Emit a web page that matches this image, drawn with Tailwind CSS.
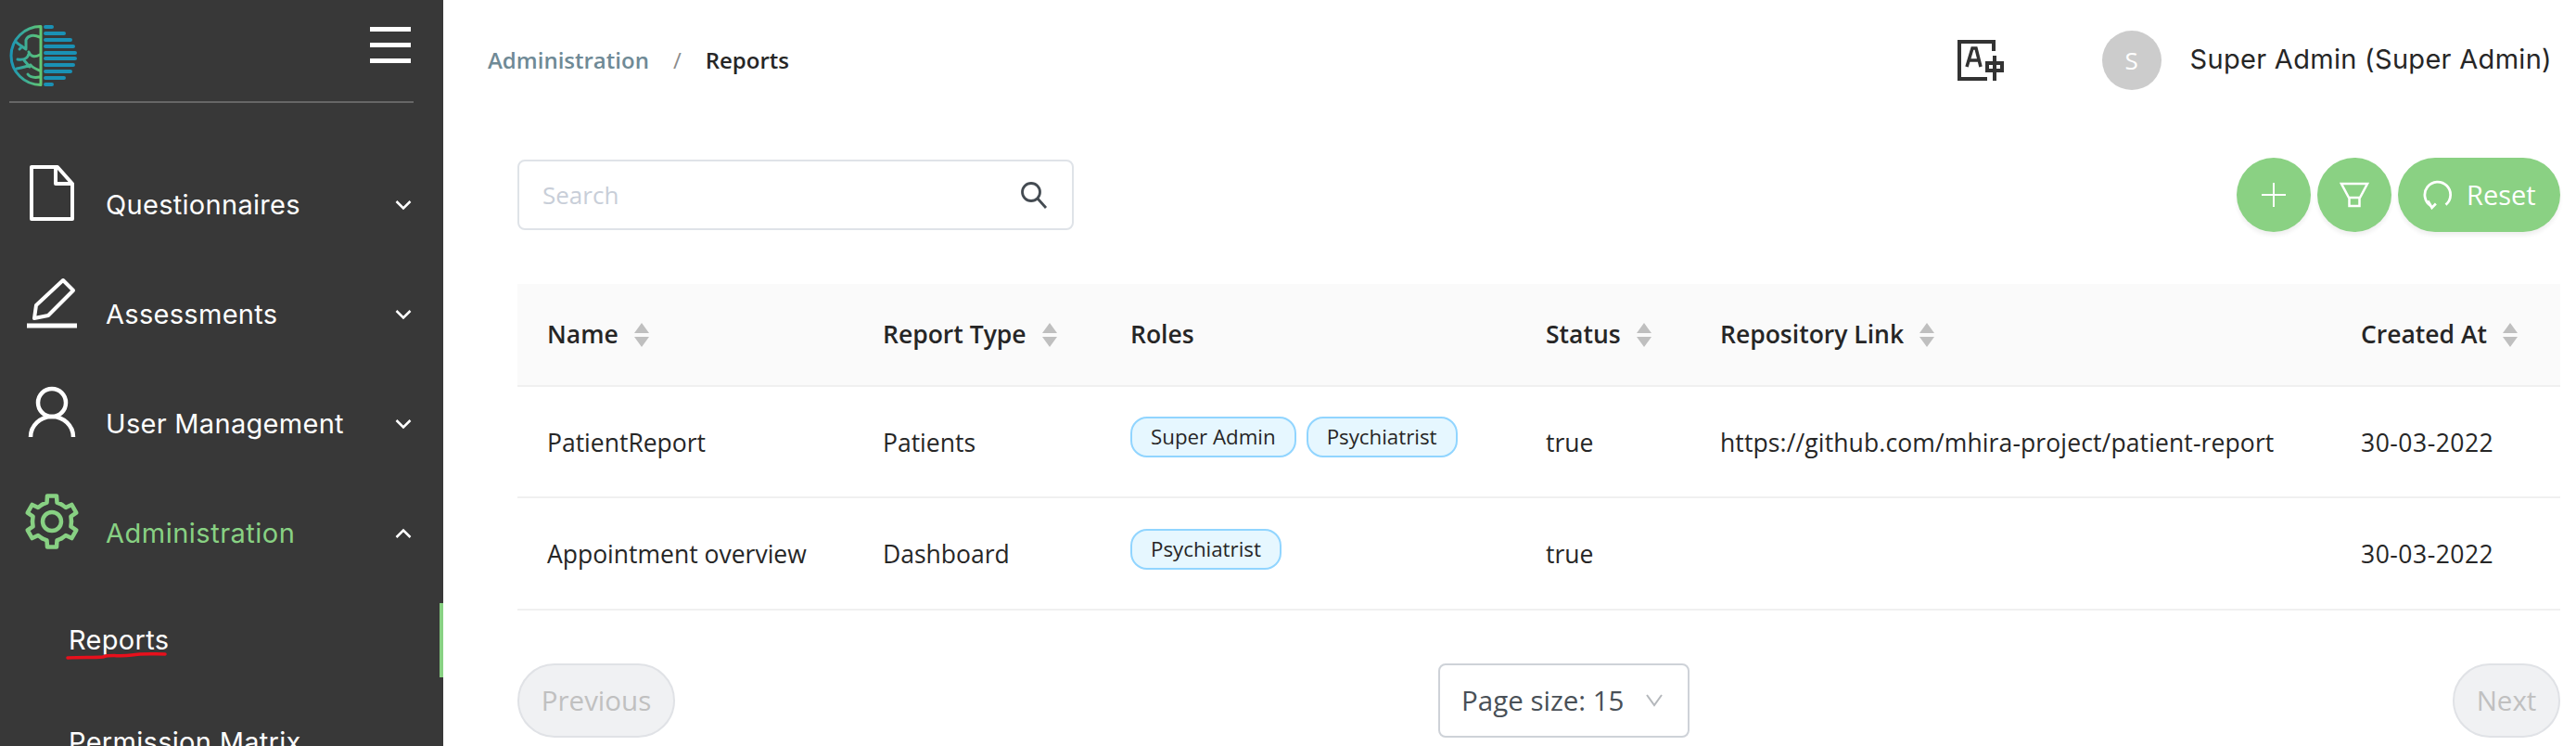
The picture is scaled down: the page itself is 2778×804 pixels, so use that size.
<!DOCTYPE html>
<html lang="en">
<head>
<meta charset="UTF-8">
<script src="https://cdn.jsdelivr.net/npm/@tailwindcss/browser@4"></script>
<title>Reports</title>
</head>
<body class="h-[804px] overflow-hidden bg-white font-['Open_Sans',sans-serif] text-[#262626]">
<div class="flex h-[804px] overflow-hidden">

  <!-- sidebar -->
  <aside class="w-[478px] shrink-0 h-full bg-[#383838] overflow-hidden font-['Inter',sans-serif] text-white text-[29px] tracking-[0.3px]">
    <div class="relative mx-[10px] w-[436px] h-[111px] border-b-2 border-[#666666]">
      <svg class="absolute left-[-10px] top-0" width="90" height="100" viewBox="0 0 90 100" fill="none">
        <defs>
          <linearGradient id="lg" x1="11" y1="0" x2="44" y2="0" gradientUnits="userSpaceOnUse">
            <stop offset="0" stop-color="#1a94b8"/>
            <stop offset="1" stop-color="#62c772"/>
          </linearGradient>
        </defs>
        <g stroke="url(#lg)" stroke-width="3" stroke-linecap="round">
          <path d="M44 28.500V91.500M44 28.500A32 31.500 0 0 0 44 91.500"/>
          <path d="M43 40C36 37 30 38 28 43M17 45C20 48 24 50 28 53M24 50L21 53M28 43L28 52"/>
          <path d="M43 59C37 62 33 61 31 56M31 58C30 63 25 65 19 64"/>
          <path d="M18 74C23 73 28 72 33 70M26 65L32 72M43 76C38 74 35 73 33 70"/>
          <path d="M43 83C37 84 32 83 30 80"/>
        </g>
        <g stroke="#1a91b5" stroke-width="4" stroke-linecap="round">
          <path d="M49 29H56M49 36H69M49 43H76M49 50H79M49 57H81M49 63H81M49 70H79M49 77H76M49 84H69M49 91H56"/>
        </g>
      </svg>
      <div class="absolute left-[389px] top-[29px] w-[44px] flex flex-col gap-[12px]">
        <span class="block h-[5px] bg-white"></span>
        <span class="block h-[5px] bg-white"></span>
        <span class="block h-[5px] bg-white"></span>
      </div>
    </div>

    <nav class="pt-[51px]">
      <div class="flex items-center h-[118px] pl-[26px] pr-[34px]">
        <svg class="mb-[26px]" width="60" height="64" viewBox="0 0 60 64" fill="none" stroke="#fff" stroke-width="4" stroke-linejoin="round">
          <path d="M8 4H36L52 22V60H8Z"/><path d="M34 4V22H52"/>
        </svg>
        <span class="ml-[28px] flex-1">Questionnaires</span>
        <svg width="18" height="12" viewBox="0 0 18 12" fill="none" stroke="#fff" stroke-width="2.500"><path d="M1.500 2L9 9.500L16.500 2"/></svg>
      </div>
      <div class="flex items-center h-[118px] pl-[26px] pr-[34px]">
        <svg class="mb-[26px]" width="60" height="60" viewBox="0 0 60 60" fill="none" stroke="#fff" stroke-width="4" stroke-linejoin="round">
          <path d="M11 47L13 33L42 6L53 17L26 44Z"/><path d="M3 55H57" stroke-width="5"/>
        </svg>
        <span class="ml-[28px] flex-1">Assessments</span>
        <svg width="18" height="12" viewBox="0 0 18 12" fill="none" stroke="#fff" stroke-width="2.500"><path d="M1.500 2L9 9.500L16.500 2"/></svg>
      </div>
      <div class="flex items-center h-[118px] pl-[26px] pr-[34px]">
        <svg class="mb-[26px]" width="60" height="60" viewBox="0 0 60 60" fill="none" stroke="#fff" stroke-width="4.500">
          <circle cx="30" cy="20" r="15"/><path d="M7 57A23 22 0 0 1 53 57"/>
        </svg>
        <span class="ml-[28px] flex-1">User Management</span>
        <svg width="18" height="12" viewBox="0 0 18 12" fill="none" stroke="#fff" stroke-width="2.500"><path d="M1.500 2L9 9.500L16.500 2"/></svg>
      </div>
      <div class="flex items-center h-[118px] pl-[26px] pr-[34px]">
        <svg class="mb-[26px]" width="60" height="64" viewBox="-30 -32 60 64" fill="none" stroke="#88d183" stroke-width="4.500" stroke-linejoin="round" stroke-linecap="round">
          <circle cx="0" cy="0" r="10"/>
          <path d="M-10.500 -18.200L-5.500 -20.400L-5 -27.500H5L5.500 -20.400L10.500 -18.200"/>
          <path transform="rotate(60)" d="M-10.500 -18.200L-5.500 -20.400L-5 -27.500H5L5.500 -20.400L10.500 -18.200"/>
          <path transform="rotate(120)" d="M-10.500 -18.200L-5.500 -20.400L-5 -27.500H5L5.500 -20.400L10.500 -18.200"/>
          <path transform="rotate(180)" d="M-10.500 -18.200L-5.500 -20.400L-5 -27.500H5L5.500 -20.400L10.500 -18.200"/>
          <path transform="rotate(240)" d="M-10.500 -18.200L-5.500 -20.400L-5 -27.500H5L5.500 -20.400L10.500 -18.200"/>
          <path transform="rotate(300)" d="M-10.500 -18.200L-5.500 -20.400L-5 -27.500H5L5.500 -20.400L10.500 -18.200"/>
        </svg>
        <span class="ml-[28px] flex-1 text-[#88d183] tracking-[0.5px]">Administration</span>
        <svg width="18" height="12" viewBox="0 0 18 12" fill="none" stroke="#fff" stroke-width="2.500"><path d="M1.500 10L9 2.500L16.500 10"/></svg>
      </div>
      <div class="relative flex items-center h-[80px] mt-[16px] pl-[74px] border-r-4 border-[#88d183]">
        <span>Reports</span>
        <svg class="absolute left-[70px] top-[50px]" width="112" height="12" viewBox="0 0 112 12" fill="none" stroke="#e8101c" stroke-width="3.500" stroke-linecap="round"><path d="M3 9C20 8 28 9 41 8C50 5 58 8 72 6C85 4 95 5 108 5"/></svg>
      </div>
      <div class="flex items-center h-[80px] mt-[30px] pl-[74px]">Permission Matrix</div>
    </nav>
  </aside>

  <!-- main -->
  <main class="flex-1 min-w-0">
    <header class="flex items-center h-[130px] pl-[48px] pr-[26px] text-[#262626]">
      <div class="flex items-center text-[24px] font-semibold">
        <span class="text-[#6f8a96]">Administration</span>
        <span class="mx-[26px] font-normal text-[#8c8c8c]">/</span>
        <span>Reports</span>
      </div>
      <svg class="ml-auto" width="56" height="52" viewBox="0 0 56 52" fill="none" stroke="#333" stroke-width="4">
        <path d="M43 16V6H6V46H36"/>
        <path d="M14 33L20 13H24L29 33M17 26H27" stroke-width="3.500"/>
        <rect x="36" y="29" width="16" height="8"/>
        <path d="M44 21V48"/>
      </svg>
      <div class="ml-[104px] flex items-center justify-center w-[64px] h-[64px] rounded-full bg-[#cccccc] text-white text-[26px]">S</div>
      <span class="ml-[31px] -mt-[3px] font-['Inter',sans-serif] text-[29px] tracking-[0.3px]">Super Admin (Super Admin)</span>
    </header>

    <div class="mt-[40px] ml-[80px] mr-[17px]">
      <div class="flex items-start h-[80px] pt-[2px]">
        <div class="flex items-center w-[600px] h-[76px] pl-[25px] pr-[26px] border-2 border-[#dfe3e8] rounded-[8px]">
          <span class="flex-1 text-[#c8ced8] text-[26px]">Search</span>
          <svg width="30" height="30" viewBox="0 0 30 30" fill="none" stroke="#444b52" stroke-width="2.800"><circle cx="12" cy="12" r="9.500"/><path d="M19 19L28 29"/></svg>
        </div>
        <div class="ml-auto -mt-[2px] flex gap-[7px] text-white">
          <button class="flex items-center justify-center w-[80px] h-[80px] rounded-full bg-[#8ad183] shadow-[0_4px_4px_rgba(0,0,0,0.06)]">
            <svg width="26" height="26" viewBox="0 0 26 26" fill="none" stroke="#fff" stroke-width="2"><path d="M13 0V26M0 13H26"/></svg>
          </button>
          <button class="flex items-center justify-center w-[80px] h-[80px] rounded-full bg-[#8ad183] shadow-[0_4px_4px_rgba(0,0,0,0.06)]">
            <svg width="32" height="28" viewBox="0 0 32 28" fill="none" stroke="#fff" stroke-width="2.500"><path d="M2 2H30L22 17H10ZM10.500 17H21.500V26H10.500Z"/></svg>
          </button>
          <button class="flex items-center w-[175px] h-[80px] pl-[27px] rounded-full bg-[#8ad183] shadow-[0_4px_4px_rgba(0,0,0,0.06)] text-[29px]">
            <svg width="32" height="32" viewBox="0 0 30 30" fill="none" stroke="#fff" stroke-width="2.600"><path d="M8 26A13 13 0 1 1 23 25"/><path d="M5 21L9 28L13 24"/></svg>
            <span class="ml-[15px]">Reset</span>
          </button>
        </div>
      </div>

      <table class="mt-[56px] w-full table-fixed text-[26.500px]">
        <colgroup>
          <col class="w-[362px]"><col class="w-[267px]"><col class="w-[448px]"><col class="w-[188px]"><col class="w-[691px]"><col class="w-[247px]">
        </colgroup>
        <thead class="bg-[#fafafa] text-left font-semibold">
          <tr class="h-[110px] border-b-2 border-[#f0f0f0]">
            <th class="pl-[32px] font-semibold"><span class="inline-flex items-center gap-[17px]">Name
              <svg width="16" height="26" viewBox="0 0 16 26" fill="#bfbfbf"><path d="M8 0L16 11H0ZM8 26L0 15H16Z"/></svg></span></th>
            <th class="pl-[32px] font-semibold"><span class="inline-flex items-center gap-[17px]">Report Type
              <svg width="16" height="26" viewBox="0 0 16 26" fill="#bfbfbf"><path d="M8 0L16 11H0ZM8 26L0 15H16Z"/></svg></span></th>
            <th class="pl-[32px] font-semibold">Roles</th>
            <th class="pl-[32px] font-semibold"><span class="inline-flex items-center gap-[17px]">Status
              <svg width="16" height="26" viewBox="0 0 16 26" fill="#bfbfbf"><path d="M8 0L16 11H0ZM8 26L0 15H16Z"/></svg></span></th>
            <th class="pl-[32px] font-semibold"><span class="inline-flex items-center gap-[17px]">Repository Link
              <svg width="16" height="26" viewBox="0 0 16 26" fill="#bfbfbf"><path d="M8 0L16 11H0ZM8 26L0 15H16Z"/></svg></span></th>
            <th class="pl-[32px] font-semibold"><span class="inline-flex items-center gap-[17px]">Created At
              <svg width="16" height="26" viewBox="0 0 16 26" fill="#bfbfbf"><path d="M8 0L16 11H0ZM8 26L0 15H16Z"/></svg></span></th>
          </tr>
        </thead>
        <tbody>
          <tr class="h-[120px] border-b-2 border-[#f0f0f0]">
            <td class="pl-[32px] pt-[3px]">PatientReport</td>
            <td class="pl-[32px] pt-[3px]">Patients</td>
            <td class="pl-[32px]">
              <div class="flex gap-[11px] -mt-[10px]">
                <span class="flex items-center h-[44px] px-[20px] rounded-[18px] bg-[#e6f7ff] border-2 border-[#91d5ff] text-[22.300px]">Super Admin</span>
                <span class="flex items-center h-[44px] px-[20px] rounded-[18px] bg-[#e6f7ff] border-2 border-[#91d5ff] text-[22.300px]">Psychiatrist</span>
              </div>
            </td>
            <td class="pl-[32px] pt-[3px]">true</td>
            <td class="pl-[32px] pt-[3px] tracking-[0.12px]">https://github.com/mhira-project/patient-report</td>
            <td class="pl-[32px] pt-[3px] tracking-[0.5px]">30-03-2022</td>
          </tr>
          <tr class="h-[121px] border-b-2 border-[#f0f0f0]">
            <td class="pl-[32px] pt-[3px]">Appointment overview</td>
            <td class="pl-[32px] pt-[3px]">Dashboard</td>
            <td class="pl-[32px]">
              <div class="flex gap-[11px] -mt-[10px]">
                <span class="flex items-center h-[44px] px-[20px] rounded-[18px] bg-[#e6f7ff] border-2 border-[#91d5ff] text-[22.300px]">Psychiatrist</span>
              </div>
            </td>
            <td class="pl-[32px] pt-[3px]">true</td>
            <td class="pl-[32px]"></td>
            <td class="pl-[32px] pt-[3px] tracking-[0.5px]">30-03-2022</td>
          </tr>
        </tbody>
      </table>

      <div class="mt-[57px] flex items-center justify-between text-[29.500px]">
        <button class="w-[170px] h-[80px] rounded-full bg-[#f0f1f3] border-2 border-[#e0e2e6] text-[#c0c0c0]">Previous</button>
        <div class="ml-[823px] flex items-center w-[271px] h-[80px] pl-[23px] border-2 border-[#ced2d8] rounded-[8px] text-[#495057]">
          <span>Page size: 15</span>
          <svg class="ml-[24px]" width="18" height="14" viewBox="0 0 18 14" fill="none" stroke="#b5b8bc" stroke-width="2"><path d="M1 1L9 12L17 1"/></svg>
        </div>
        <button class="ml-auto w-[116px] h-[80px] rounded-full bg-[#f0f1f3] border-2 border-[#e0e2e6] text-[#c0c0c0]">Next</button>
      </div>
    </div>
  </main>
</div>
</body>
</html>
